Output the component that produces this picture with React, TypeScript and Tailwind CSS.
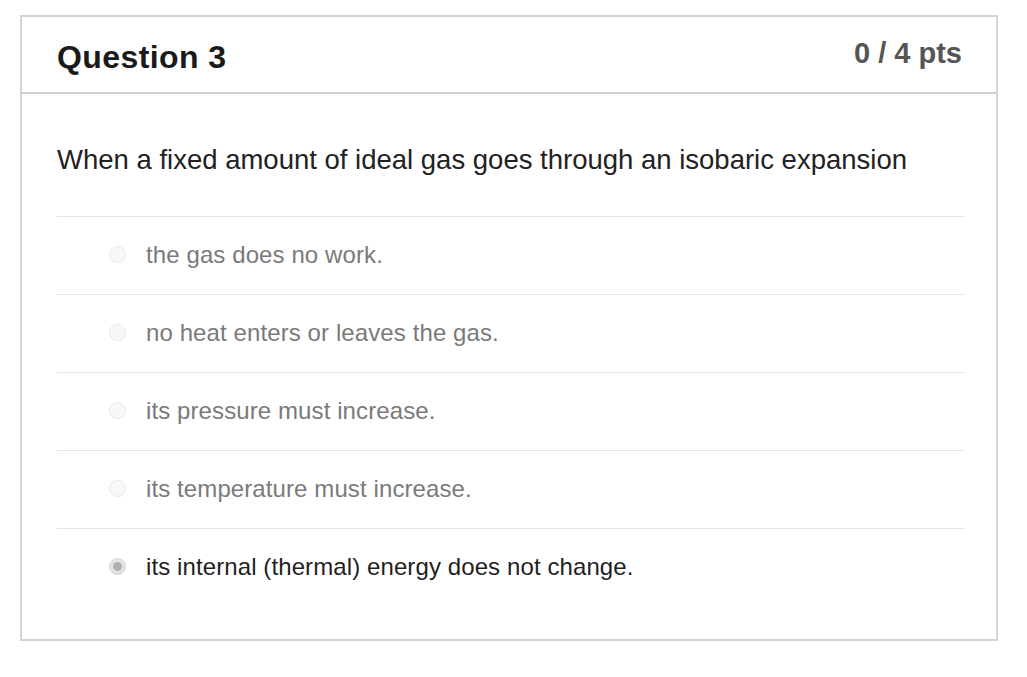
import React from "react";

const options = [
  { text: "the gas does no work.", selected: false },
  { text: "no heat enters or leaves the gas.", selected: false },
  { text: "its pressure must increase.", selected: false },
  { text: "its temperature must increase.", selected: false },
  { text: "its internal (thermal) energy does not change.", selected: true },
];

export default function App() {
  return (
    <div className="w-[1027px] h-[677px] bg-white pt-[15px] pl-[20px]" style={{ fontFamily: '"Liberation Sans", Arial, sans-serif' }}>
      <div className="w-[978px] h-[626px] border-2 border-[#d4d4d4] bg-white">
        <div className="h-[77px] border-b-2 border-[#d0d0d0] flex items-start justify-between pl-[35px] pr-[34px]">
          <div className="mt-[22px] text-[32px] leading-[37px] font-bold text-[#1a1a1a] tracking-[0.4px]">Question 3</div>
          <div className="mt-[20px] text-[29px] leading-[33px] font-bold text-[#555]">0 / 4 pts</div>
        </div>
        <div className="pl-[35px] pr-[30px]">
          <div className="pt-[50px] pb-[40px] text-[27.5px] text-[#222] leading-[32px]">
            When a fixed amount of ideal gas goes through an isobaric expansion
          </div>
          <div className="pr-[1px]">
            {options.map((o, i) => (
              <div key={i} className="h-[78px] border-t border-[#e6e6e6] flex items-center pl-[52px] pb-[2px]">
                <span
                  className={
                    "w-[17px] h-[17px] shrink-0 rounded-full border flex items-center justify-center " +
                    (o.selected ? "border-[#d4d4d4] bg-[#e4e4e4]" : "border-[#e8e8e8] bg-[#f8f8f8]")
                  }
                >
                  {o.selected && <span className="w-[9px] h-[9px] rounded-full bg-[#b0b0b0]" />}
                </span>
                <span
                  className={
                    "ml-[20px] text-[24px] tracking-[0.1px] " + (o.selected ? "text-[#1f1f1f]" : "text-[#7a7a7a]")
                  }
                >
                  {o.text}
                </span>
              </div>
            ))}
          </div>
        </div>
      </div>
    </div>
  );
}
